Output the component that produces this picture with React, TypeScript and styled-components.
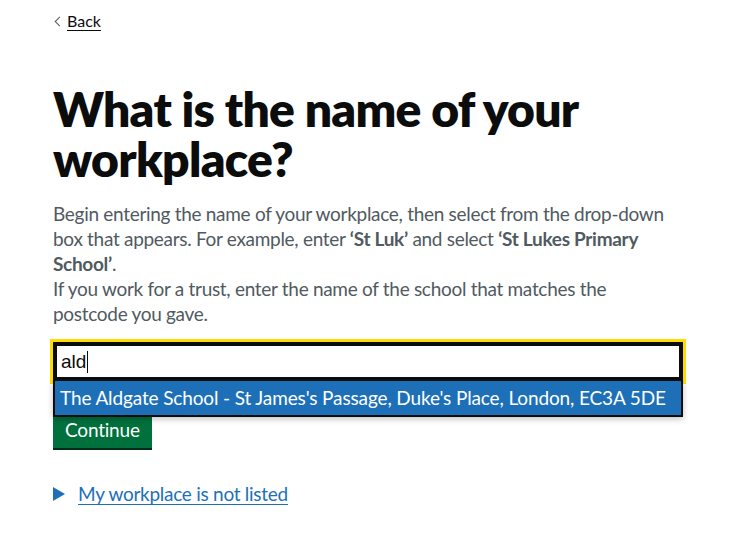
import React from 'react';
import styled, { createGlobalStyle } from 'styled-components';

const colors = {
  text: '#0b0c0c',
  secondary: '#505a5f',
  link: '#1d70b8',
  focus: '#ffdd00',
  green: '#00703c',
  greenShadow: '#002d18',
};

const GlobalStyle = createGlobalStyle`
  html, body {
    margin: 0;
    padding: 0;
    background: #ffffff;
  }
  body {
    font-family: Lato, "Liberation Sans", Arial, sans-serif;
    color: ${colors.text};
    -webkit-font-smoothing: antialiased;
  }
`;

const Page = styled.main`
  padding: 11px 46px 0 53px;
`;

const BackLink = styled.a`
  position: relative;
  display: inline-block;
  padding-left: 14px;
  font-size: 16px;
  line-height: 20px;
  color: ${colors.text};
  text-decoration: underline;
  text-underline-offset: 3px;
  &::before {
    content: '';
    position: absolute;
    left: 3px;
    top: 7px;
    width: 6px;
    height: 6px;
    border-left: 1px solid #505a5f;
    border-bottom: 1px solid #505a5f;
    transform: rotate(45deg);
  }
`;

const Heading = styled.h1`
  margin: 53px 0 17px;
  font-size: 48px;
  line-height: 50px;
  font-weight: 800;
  letter-spacing: -0.7px;
  color: ${colors.text};
`;

const Hint = styled.p`
  margin: 0 0 16px;
  font-size: 19px;
  line-height: 25px;
  letter-spacing: -0.3px;
  color: ${colors.secondary};
  white-space: nowrap;
  strong {
    font-weight: 700;
  }
`;

const Autocomplete = styled.div`
  position: relative;
  margin-bottom: 29px;
`;

const Field = styled.div`
  box-sizing: border-box;
  height: 39px;
  padding: 0 6px;
  display: flex;
  align-items: center;
  border: 2px solid ${colors.text};
  box-shadow: inset 0 0 0 2px ${colors.text};
  outline: 3px solid ${colors.focus};
  outline-offset: 0;
  font-family: "Liberation Sans", Arial, sans-serif;
  font-size: 19px;
  color: ${colors.text};
`;

const Caret = styled.span`
  display: inline-block;
  width: 1px;
  height: 22px;
  margin-left: 1px;
  background: ${colors.text};
`;

const Menu = styled.ul`
  position: absolute;
  z-index: 2;
  left: 0;
  right: 0;
  top: 100%;
  margin: 0;
  padding: 0;
  list-style: none;
  background: #ffffff;
  border: 2px solid ${colors.text};
  border-top: 0;
  box-shadow: 0 2px 6px rgba(0, 0, 0, 0.25);
`;

const Option = styled.li<{ $active?: boolean }>`
  padding: 5px 5px;
  font-size: 19px;
  line-height: 24px;
  letter-spacing: -0.13px;
  color: ${({ $active }) => ($active ? '#ffffff' : colors.text)};
  background: ${({ $active }) => ($active ? colors.link : '#ffffff')};
  white-space: nowrap;
`;

const Button = styled.button`
  display: block;
  box-sizing: border-box;
  margin: 0 0 34px;
  padding: 8px 10px 7px;
  border: 2px solid transparent;
  border-radius: 0;
  background: ${colors.green};
  box-shadow: 0 2px 0 ${colors.greenShadow};
  color: #ffffff;
  font-family: inherit;
  font-size: 19px;
  line-height: 19px;
  letter-spacing: -0.2px;
  cursor: pointer;
`;

const Details = styled.details`
  font-size: 19px;
  line-height: 24px;
  letter-spacing: -0.27px;
`;

const Summary = styled.summary`
  position: relative;
  display: inline-block;
  padding-left: 25px;
  color: ${colors.link};
  cursor: pointer;
  list-style: none;
  &::-webkit-details-marker {
    display: none;
  }
  &::before {
    content: '';
    position: absolute;
    left: 0;
    top: 5px;
    width: 0;
    height: 0;
    border-style: solid;
    border-width: 7px 0 7px 12px;
    border-color: transparent transparent transparent ${colors.link};
  }
`;

const SummaryText = styled.span`
  text-decoration: underline;
  text-underline-offset: 3px;
`;

export default function App() {
  return (
    <>
      <GlobalStyle />
      <Page>
        <BackLink href="#">Back</BackLink>
        <Heading>
          What is the name of your
          <br />
          workplace?
        </Heading>
        <Hint>
          Begin entering the name of your workplace, then select from the drop-down
          <br />
          box that appears. For example, enter <strong>‘St Luk’</strong> and select{' '}
          <strong>‘St Lukes Primary</strong>
          <br />
          <strong>School’</strong>.
          <br />
          If you work for a trust, enter the name of the school that matches the
          <br />
          postcode you gave.
        </Hint>
        <Autocomplete>
          <Field>
            ald
            <Caret />
          </Field>
          <Menu>
            <Option $active>
              The Aldgate School - St James's Passage, Duke's Place, London, EC3A 5DE
            </Option>
          </Menu>
        </Autocomplete>
        <Button type="button">Continue</Button>
        <Details>
          <Summary>
            <SummaryText>My workplace is not listed</SummaryText>
          </Summary>
        </Details>
      </Page>
    </>
  );
}
